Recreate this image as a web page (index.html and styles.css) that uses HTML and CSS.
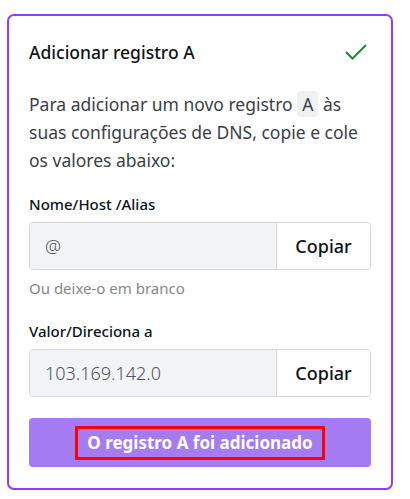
FILE: index.html
```html
<!DOCTYPE html>
<html>
	<head>
		<meta charset="UTF-8">
		<title>Adicionar registro A</title>
		<link rel="stylesheet" href="styles.css">
	</head>
	<body>
		<div class="card">
			<div class="head">
				<h2 class="title">Adicionar registro A</h2>
				<svg class="check" width="22" height="16" viewBox="0 0 22 16">
					<path d="M1 8 L7.5 14.5 L21 1" fill="none" stroke="#1e8a3a" stroke-width="2"/>
				</svg>
			</div>
			<p class="intro">Para adicionar um novo registro <span class="tag">A</span> às suas configurações de DNS, copie e cole os valores abaixo:</p>

			<div class="field">
				<label class="label">Nome/Host /Alias</label>
				<div class="copybox">
					<span class="value">@</span>
					<button class="copy">Copiar</button>
				</div>
				<div class="hint">Ou deixe-o em branco</div>
			</div>

			<div class="field">
				<label class="label">Valor/Direciona a</label>
				<div class="copybox">
					<span class="value">103.169.142.0</span>
					<button class="copy">Copiar</button>
				</div>
			</div>

			<button class="done"><span class="done-text">O registro A foi adicionado</span></button>
		</div>
	</body>
</html>
```

FILE: styles.css
```css
*{
	margin: 0;
	padding: 0;
	box-sizing: border-box;
}
body{
	background: #fff;
	font-family: "Noto Sans", sans-serif;
	color: #0e1318;
}
.card{
	width: 386px;
	height: 476px;
	margin: 14px 0 0 7px;
	border: 2px solid #8b3dff;
	border-radius: 7px;
	padding: 24px 20px 20px;
}
.head{
	display: flex;
	justify-content: space-between;
	align-items: center;
	height: 24px;
}
.title{
	font-size: 17.5px;
	font-weight: 500;
	line-height: 24px;
}
.check{
	margin-right: 4px;
}
.intro{
	margin-top: 26px;
	font-size: 17.5px;
	line-height: 28px;
	color: #3c4046;
}
.tag{
	display: inline-block;
	background: #f0f1f3;
	border-radius: 4px;
	padding: 0 5px;
	line-height: 26px;
}
.field{
	margin-top: 20px;
}
.label{
	display: block;
	font-size: 15px;
	font-weight: 500;
	line-height: 20px;
}
.copybox{
	margin-top: 8px;
	height: 48px;
	display: flex;
	border: 1px solid #d5d7da;
	border-radius: 4px;
	overflow: hidden;
}
.value{
	flex: 1;
	background: #f2f3f5;
	padding-left: 15px;
	font-size: 18px;
	font-weight: 300;
	line-height: 46px;
	color: #50545a;
}
.copy{
	width: 94px;
	border: none;
	border-left: 1px solid #d5d7da;
	background: #fff;
	font-family: inherit;
	font-size: 18px;
	font-weight: 500;
	color: #0e1318;
}
.hint{
	margin-top: 8px;
	font-size: 15px;
	line-height: 20px;
	color: #85888c;
}
.field + .field{
	margin-top: 23px;
}
.done{
	display: flex;
	justify-content: center;
	align-items: center;
	width: 100%;
	height: 49px;
	margin-top: 21px;
	border: none;
	border-radius: 4px;
	background: #a47bf0;
	font-family: inherit;
}
.done-text{
	border: 3px solid #ff0000;
	padding: 2px 9px;
	font-size: 17px;
	font-weight: 700;
	color: #fff;
	line-height: 24px;
}
```
